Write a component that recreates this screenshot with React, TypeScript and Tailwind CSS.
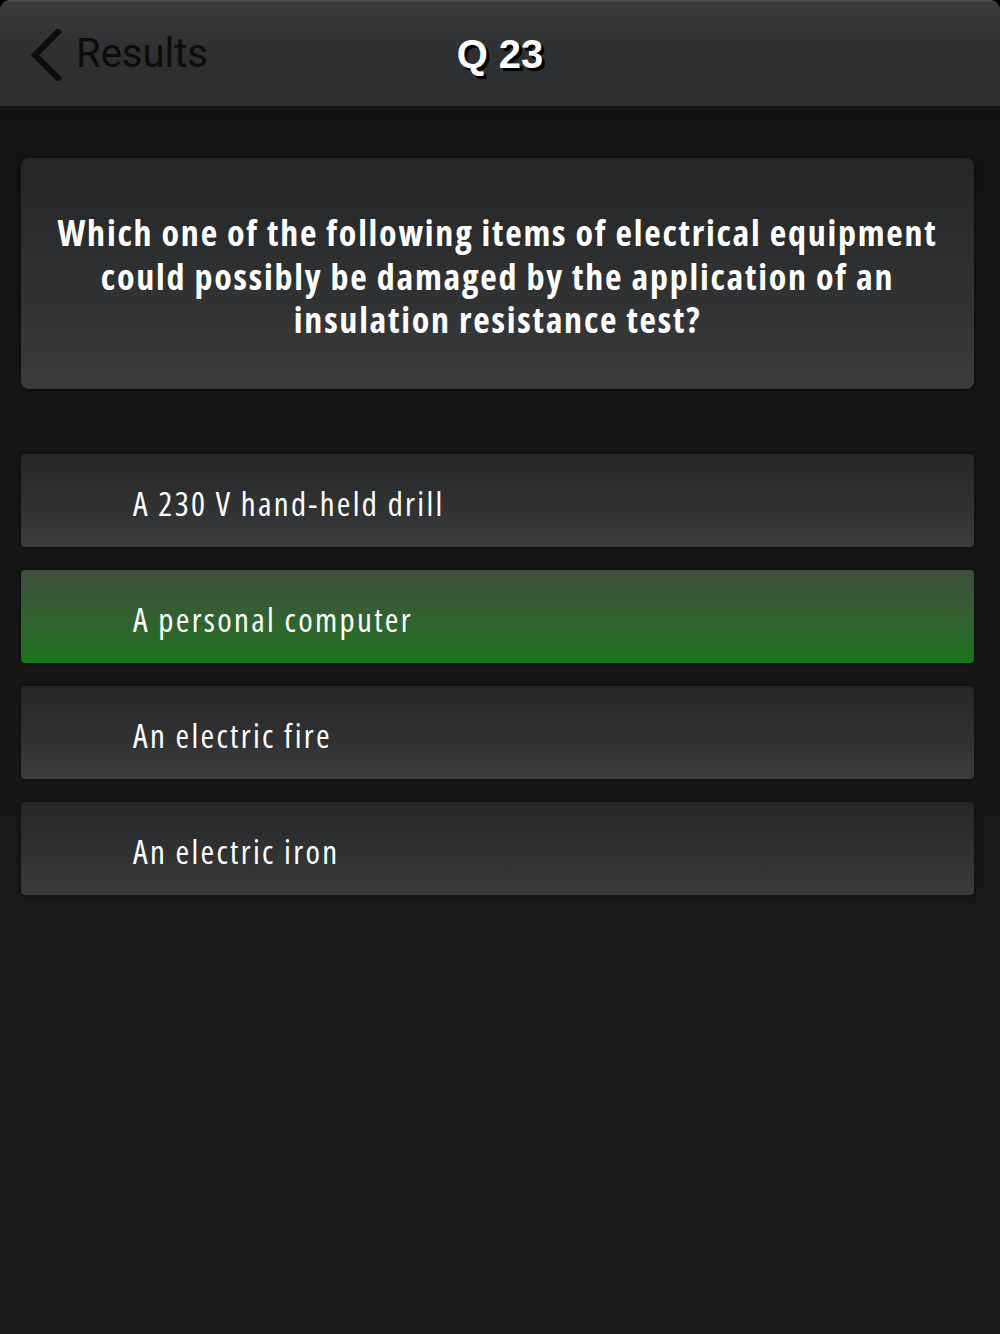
import React from "react";

const answers = [
  { text: "A 230 V hand-held drill", correct: false },
  { text: "A personal computer", correct: true },
  { text: "An electric fire", correct: false },
  { text: "An electric iron", correct: false },
];

export default function App() {
  return (
    <div className="w-[1000px] h-[1334px] bg-black overflow-hidden flex flex-col">
      <div className="h-[106px] shrink-0 rounded-t-[10px] bg-gradient-to-b from-[#3a3b3c] via-[#2e2f30] to-[#2e2f30] border-t-2 border-[#4a4b4c] flex items-center relative">
        <div className="flex items-center pl-[30px] gap-[14px]">
          <svg width="32" height="52" viewBox="0 0 32 52" className="mt-[2px]">
            <path d="M28 3 L5 26 L28 49" fill="none" stroke="#0c0c0c" strokeWidth="6" strokeLinecap="square" />
          </svg>
          <span className="text-[40px] text-[#0c0c0c] leading-none" style={{ fontFamily: "Roboto, sans-serif" }}>
            Results
          </span>
        </div>
        <div className="absolute left-0 right-0 top-0 bottom-0 flex items-center justify-center pointer-events-none">
          <span
            className="text-[40px] font-bold text-white leading-none [text-shadow:3px_3px_0_#000]"
            style={{ fontFamily: "'Liberation Sans', Arial, sans-serif" }}
          >
            Q 23
          </span>
        </div>
      </div>
      <div className="flex-1 bg-gradient-to-b from-[#131313] to-[#1b1b1b] pl-[21px] pr-[26px] pt-[52px] flex flex-col">
        <div className="h-[231px] rounded-[8px] bg-gradient-to-b from-[#242526] to-[#3a3b3d] shadow-[0_0_4px_rgba(0,0,0,0.6)] flex items-center justify-center px-[30px] pt-[6px]">
          <p
            className="text-white font-bold text-center text-[36px] leading-[43.5px] tracking-[1.75px] font-stretch-[75%]"
            style={{ fontFamily: "'Open Sans', sans-serif" }}
          >
            Which one of the following items of electrical equipment could possibly be damaged by the application of an insulation resistance test?
          </p>
        </div>
        <div className="mt-[65px] flex flex-col gap-[23px]">
          {answers.map((a) => (
            <div
              key={a.text}
              className={
                a.correct
                  ? "h-[93px] rounded-[4px] bg-gradient-to-b from-[#3d4d3d] to-[#19741a] flex items-center pl-[112px] shadow-[0_0_4px_rgba(0,0,0,0.6)]"
                  : "h-[93px] rounded-[4px] bg-gradient-to-b from-[#252627] to-[#3a3b3d] flex items-center pl-[112px] shadow-[0_0_4px_rgba(0,0,0,0.6)]"
              }
            >
              <span
                className="text-white text-[33px] leading-none tracking-[2.3px] mt-[6px] font-stretch-[75%]"
                style={{ fontFamily: "'Open Sans', sans-serif" }}
              >
                {a.text}
              </span>
            </div>
          ))}
        </div>
      </div>
    </div>
  );
}
